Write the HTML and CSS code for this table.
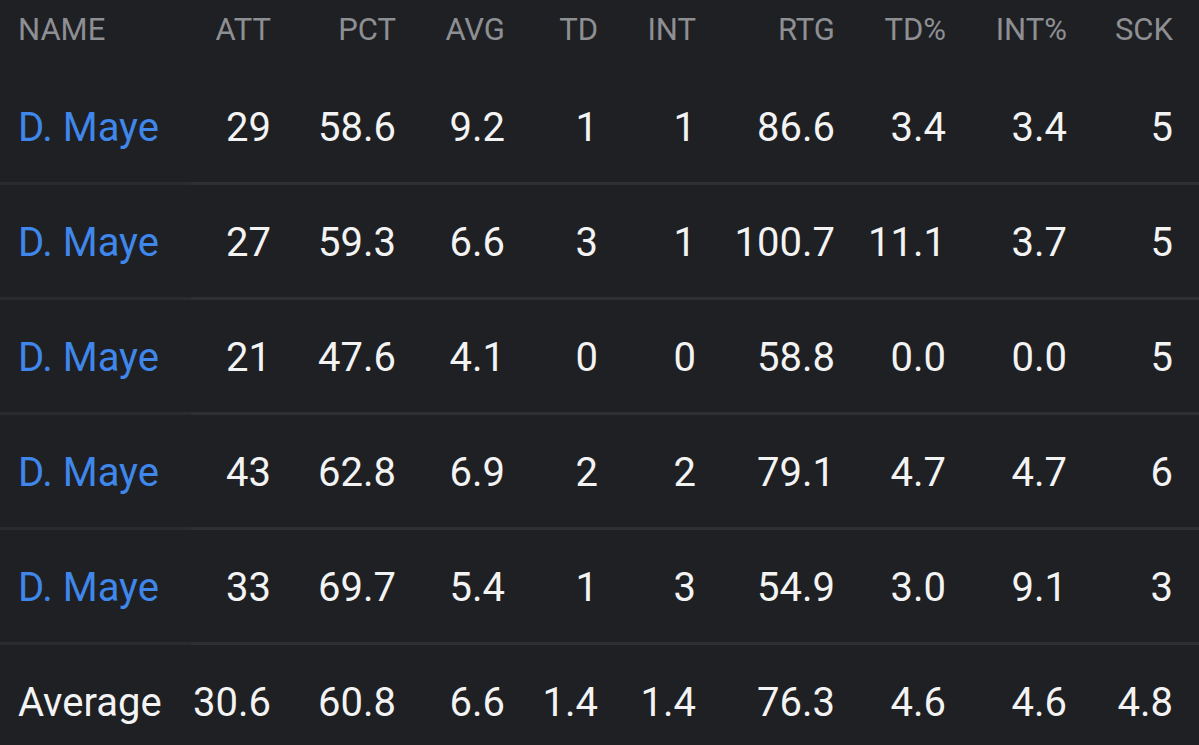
FILE: index.html
```html
<!DOCTYPE html>
<html>
<head>
<meta charset="utf-8">
<link rel="stylesheet" href="styles.css">
</head>
<body>
<div class="table">
  <div class="row head">
    <div class="cell name">NAME</div><div class="cell">ATT</div><div class="cell">PCT</div><div class="cell">AVG</div><div class="cell">TD</div><div class="cell">INT</div><div class="cell">RTG</div><div class="cell">TD%</div><div class="cell">INT%</div><div class="cell">SCK</div>
  </div>
  <div class="row body">
    <div class="cell name link">D. Maye</div><div class="cell">29</div><div class="cell">58.6</div><div class="cell">9.2</div><div class="cell">1</div><div class="cell">1</div><div class="cell">86.6</div><div class="cell">3.4</div><div class="cell">3.4</div><div class="cell">5</div>
  </div>
  <div class="row body">
    <div class="cell name link">D. Maye</div><div class="cell">27</div><div class="cell">59.3</div><div class="cell">6.6</div><div class="cell">3</div><div class="cell">1</div><div class="cell">100.7</div><div class="cell">11.1</div><div class="cell">3.7</div><div class="cell">5</div>
  </div>
  <div class="row body">
    <div class="cell name link">D. Maye</div><div class="cell">21</div><div class="cell">47.6</div><div class="cell">4.1</div><div class="cell">0</div><div class="cell">0</div><div class="cell">58.8</div><div class="cell">0.0</div><div class="cell">0.0</div><div class="cell">5</div>
  </div>
  <div class="row body">
    <div class="cell name link">D. Maye</div><div class="cell">43</div><div class="cell">62.8</div><div class="cell">6.9</div><div class="cell">2</div><div class="cell">2</div><div class="cell">79.1</div><div class="cell">4.7</div><div class="cell">4.7</div><div class="cell">6</div>
  </div>
  <div class="row body">
    <div class="cell name link">D. Maye</div><div class="cell">33</div><div class="cell">69.7</div><div class="cell">5.4</div><div class="cell">1</div><div class="cell">3</div><div class="cell">54.9</div><div class="cell">3.0</div><div class="cell">9.1</div><div class="cell">3</div>
  </div>
  <div class="row body last">
    <div class="cell name">Average</div><div class="cell">30.6</div><div class="cell">60.8</div><div class="cell">6.6</div><div class="cell">1.4</div><div class="cell">1.4</div><div class="cell">76.3</div><div class="cell">4.6</div><div class="cell">4.6</div><div class="cell">4.8</div>
  </div>
</div>
</body>
</html>
```

FILE: styles.css
```css
html, body {
  margin: 0;
  padding: 0;
  background: #1f2024;
  height: 100%;
  overflow: hidden;
}
body {
  font-family: Roboto, "Noto Sans", sans-serif;
  color: #f3f3f3;
}
.table {
  width: 1199px;
}
.row {
  display: grid;
  grid-template-columns: 191px 80px 125px 109px 93px 98px 139px 111px 121px 106px 26px;
}
.cell {
  text-align: right;
  white-space: nowrap;
}
.cell.name {
  text-align: left;
  padding-left: 18px;
}
.head {
  height: 70px;
}
.head .cell {
  font-size: 31px;
  line-height: 36px;
  padding-top: 12px;
  color: #8e8f93;
}
.body .cell {
  height: 112px;
  line-height: 116px;
  font-size: 40px;
  border-bottom: 3px solid #2e2f33;
}
.body .cell.name {
  border-bottom-color: #2a2b2f;
}
.body::after {
  content: "";
  border-bottom: 3px solid #2e2f33;
}
.body.last .cell,
.body.last::after {
  border-bottom: none;
}
.link {
  color: #3f87ea;
}
```
